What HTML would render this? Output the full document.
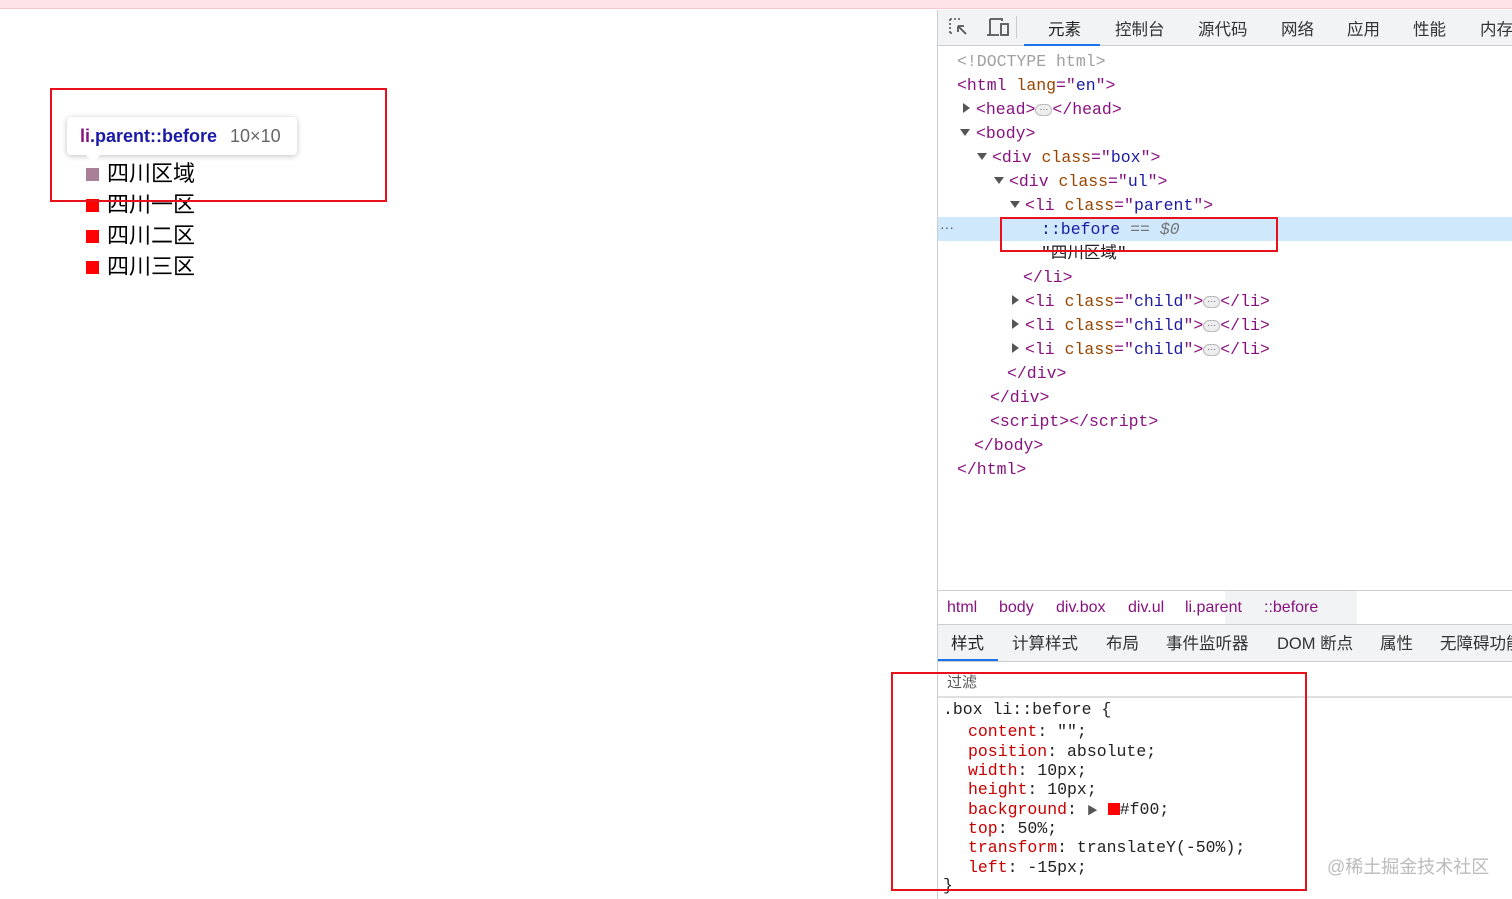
<!DOCTYPE html>
<html><head><meta charset="utf-8"><style>
*{margin:0;padding:0;box-sizing:border-box}
body{width:1512px;height:899px;position:relative;overflow:hidden;background:#fff;font-family:"Liberation Sans","Noto Sans CJK SC",sans-serif}
.abs{position:absolute;white-space:nowrap}
.m{position:absolute;font-family:"Liberation Mono","Noto Sans CJK SC",monospace;font-size:16.5px;white-space:pre;line-height:24px;height:24px;margin-top:1px}
.s{position:absolute;font-family:"Liberation Mono","Noto Sans CJK SC",monospace;font-size:16.5px;white-space:pre;line-height:20px;color:#222}
.t{color:#881280}.a{color:#994500}.v{color:#1a1aa6}.g{color:#a0a0a0}
.p{color:#c80000}
.r{position:absolute;width:0;height:0;border-left:7px solid #555;border-top:5px solid transparent;border-bottom:5px solid transparent;margin-top:1px}
.d{position:absolute;width:0;height:0;border-top:7px solid #555;border-left:5px solid transparent;border-right:5px solid transparent;margin-top:1px}
.ell{display:inline-block;width:17px;height:12px;border:1px solid #bbb;border-radius:6px;background:#eee;font-size:9px;line-height:8px;text-align:center;color:#555;vertical-align:middle;font-family:"Liberation Sans",sans-serif}
.li{position:absolute;left:86px;font-size:22px;color:#000;line-height:24px}
.sq{position:absolute;left:0;top:6px;width:13px;height:13px;background:#f00}
.tab{position:absolute;top:16px;font-size:16.5px;color:#333;white-space:nowrap}
.bc{position:absolute;top:599px;font-size:16px;color:#881280}
.bt{position:absolute;top:630px;font-size:16.5px;color:#333;white-space:nowrap}
</style></head><body>
<div class="abs" style="left:0;top:0;width:1512px;height:9px;background:#fde4e7;border-bottom:1px solid #f3c9cf"></div>

<div class="li" style="top:162px"><div class="sq" style="background:#a98098"></div><span style="margin-left:21px">四川区域</span></div>
<div class="li" style="top:193px"><div class="sq"></div><span style="margin-left:21px">四川一区</span></div>
<div class="li" style="top:224px"><div class="sq"></div><span style="margin-left:21px">四川二区</span></div>
<div class="li" style="top:255px"><div class="sq"></div><span style="margin-left:21px">四川三区</span></div>
<div class="abs" style="left:67px;top:117px;width:230px;height:38px;background:#fff;border-radius:4px;box-shadow:0 1px 6px rgba(0,0,0,.25)"></div>
<div class="abs" style="left:85px;top:154px;width:0;height:0;border-left:8px solid transparent;border-right:8px solid transparent;border-top:9px solid #fff"></div>
<div class="abs" style="left:80px;top:126px;font-size:18px;font-weight:bold;color:#1a1aa6;line-height:20px"><span style="color:#881280">li</span>.parent::before <span style="font-weight:normal;color:#666;margin-left:8px">10×10</span></div>
<div class="abs" style="left:50px;top:88px;width:337px;height:114px;border:2px solid #e8111b"></div>

<div class="abs" style="left:937px;top:10px;width:575px;height:889px;background:#fff;border-left:1px solid #cbcdd1"></div>
<div class="abs" style="left:938px;top:10px;width:574px;height:36px;background:#f1f3f4;border-bottom:1px solid #cbcdd1"></div>
<svg class="abs" style="left:948px;top:17px" width="24" height="22" viewBox="0 0 24 22"><path d="M2 2h10M2 2v14M2 16h4" stroke="#555" stroke-width="1.6" stroke-dasharray="2 2" fill="none"/><path d="M10 9l8 8M10 9h6M10 9v6" stroke="#555" stroke-width="1.8" fill="none"/></svg>
<svg class="abs" style="left:986px;top:17px" width="26" height="22" viewBox="0 0 26 22"><path d="M4 2h12v2M4 2v16M1 18h12" stroke="#555" stroke-width="1.8" fill="none"/><rect x="15" y="7" width="7" height="11" stroke="#555" stroke-width="1.8" fill="none"/></svg>
<div class="abs" style="left:1016px;top:16px;width:1px;height:22px;background:#ccc"></div>
<span class="tab" style="left:1048px;color:#222">元素</span>
<div class="abs" style="left:1024px;top:44px;width:76px;height:2px;background:#1a73e8"></div>
<span class="tab" style="left:1115px">控制台</span>
<span class="tab" style="left:1198px">源代码</span>
<span class="tab" style="left:1281px">网络</span>
<span class="tab" style="left:1347px">应用</span>
<span class="tab" style="left:1413px">性能</span>
<span class="tab" style="left:1480px">内存</span>

<div class="abs" style="left:938px;top:217px;width:574px;height:24px;background:#cfe8fc"></div>
<div class="abs" style="left:940px;top:219px;font-size:14px;color:#555">···</div>

<div class="m g" style="left:957px;top:49px">&lt;!DOCTYPE html&gt;</div>
<div class="m" style="left:957px;top:73px"><span class="t">&lt;html</span> <span class="a">lang</span><span class="t">="</span><span class="v">en</span><span class="t">"&gt;</span></div>
<i class="r" style="left:963px;top:102px"></i>
<div class="m" style="left:976px;top:97px"><span class="t">&lt;head&gt;</span><span class="ell">···</span><span class="t">&lt;/head&gt;</span></div>
<i class="d" style="left:960px;top:128px"></i>
<div class="m" style="left:976px;top:121px"><span class="t">&lt;body&gt;</span></div>
<i class="d" style="left:977px;top:152px"></i>
<div class="m" style="left:992px;top:145px"><span class="t">&lt;div</span> <span class="a">class</span><span class="t">="</span><span class="v">box</span><span class="t">"&gt;</span></div>
<i class="d" style="left:994px;top:176px"></i>
<div class="m" style="left:1009px;top:169px"><span class="t">&lt;div</span> <span class="a">class</span><span class="t">="</span><span class="v">ul</span><span class="t">"&gt;</span></div>
<i class="d" style="left:1010px;top:200px"></i>
<div class="m" style="left:1025px;top:193px"><span class="t">&lt;li</span> <span class="a">class</span><span class="t">="</span><span class="v">parent</span><span class="t">"&gt;</span></div>
<div class="m" style="left:1041px;top:217px"><span class="v">::before</span> <span style="color:#777">== <i>$0</i></span></div>
<div class="m" style="left:1041px;top:241px;color:#222">"四川区域"</div>
<div class="m t" style="left:1023px;top:265px">&lt;/li&gt;</div>
<i class="r" style="left:1012px;top:294px"></i>
<div class="m" style="left:1025px;top:289px"><span class="t">&lt;li</span> <span class="a">class</span><span class="t">="</span><span class="v">child</span><span class="t">"&gt;</span><span class="ell">···</span><span class="t">&lt;/li&gt;</span></div>
<i class="r" style="left:1012px;top:318px"></i>
<div class="m" style="left:1025px;top:313px"><span class="t">&lt;li</span> <span class="a">class</span><span class="t">="</span><span class="v">child</span><span class="t">"&gt;</span><span class="ell">···</span><span class="t">&lt;/li&gt;</span></div>
<i class="r" style="left:1012px;top:342px"></i>
<div class="m" style="left:1025px;top:337px"><span class="t">&lt;li</span> <span class="a">class</span><span class="t">="</span><span class="v">child</span><span class="t">"&gt;</span><span class="ell">···</span><span class="t">&lt;/li&gt;</span></div>
<div class="m t" style="left:1007px;top:361px">&lt;/div&gt;</div>
<div class="m t" style="left:990px;top:385px">&lt;/div&gt;</div>
<div class="m t" style="left:990px;top:409px">&lt;script&gt;&lt;/script&gt;</div>
<div class="m t" style="left:974px;top:433px">&lt;/body&gt;</div>
<div class="m t" style="left:957px;top:457px">&lt;/html&gt;</div>
<div class="abs" style="left:1000px;top:217px;width:278px;height:35px;border:2px solid #e8111b"></div>

<div class="abs" style="left:938px;top:590px;width:574px;height:1px;background:#cbcdd1"></div>
<div class="abs" style="left:1225px;top:591px;width:132px;height:33px;background:#f1f3f4"></div>
<span class="bc" style="left:947px">html</span>
<span class="bc" style="left:999px">body</span>
<span class="bc" style="left:1056px">div.box</span>
<span class="bc" style="left:1128px">div.ul</span>
<span class="bc" style="left:1185px">li.parent</span>
<span class="bc" style="left:1264px">::before</span>
<div class="abs" style="left:938px;top:624px;width:574px;height:38px;background:#f1f3f4;border-top:1px solid #cbcdd1;border-bottom:1px solid #cbcdd1"></div>
<div class="abs" style="left:938px;top:659px;width:60px;height:2px;background:#1a73e8"></div>
<span class="bt" style="left:951px;color:#222">样式</span>
<span class="bt" style="left:1012px">计算样式</span>
<span class="bt" style="left:1106px">布局</span>
<span class="bt" style="left:1166px">事件监听器</span>
<span class="bt" style="left:1277px">DOM 断点</span>
<span class="bt" style="left:1380px">属性</span>
<span class="bt" style="left:1440px">无障碍功能</span>
<div class="abs" style="left:938px;top:696px;width:574px;height:2px;background:#e0e0e0"></div>
<div class="abs" style="left:947px;top:671px;font-size:15px;color:#555">过滤</div>

<div class="s" style="left:943px;top:700px">.box li::before {</div>
<div class="s" style="left:968px;top:722px"><span class="p">content</span>: "";</div>
<div class="s" style="left:968px;top:742px"><span class="p">position</span>: absolute;</div>
<div class="s" style="left:968px;top:761px"><span class="p">width</span>: 10px;</div>
<div class="s" style="left:968px;top:780px"><span class="p">height</span>: 10px;</div>
<div class="s" style="left:968px;top:800px"><span class="p">background</span>: <span style="font-size:11px;color:#555">▶</span> <span style="display:inline-block;width:12px;height:12px;background:#f00;vertical-align:-1px"></span>#f00;</div>
<div class="s" style="left:968px;top:819px"><span class="p">top</span>: 50%;</div>
<div class="s" style="left:968px;top:838px"><span class="p">transform</span>: translateY(-50%);</div>
<div class="s" style="left:968px;top:858px"><span class="p">left</span>: -15px;</div>
<div class="s" style="left:943px;top:876px">}</div>
<div class="abs" style="left:891px;top:672px;width:416px;height:219px;border:2px solid #e8111b"></div>
<div class="abs" style="left:1327px;top:853px;font-size:18px;color:#bbb">@稀土掘金技术社区</div>
</body></html>
